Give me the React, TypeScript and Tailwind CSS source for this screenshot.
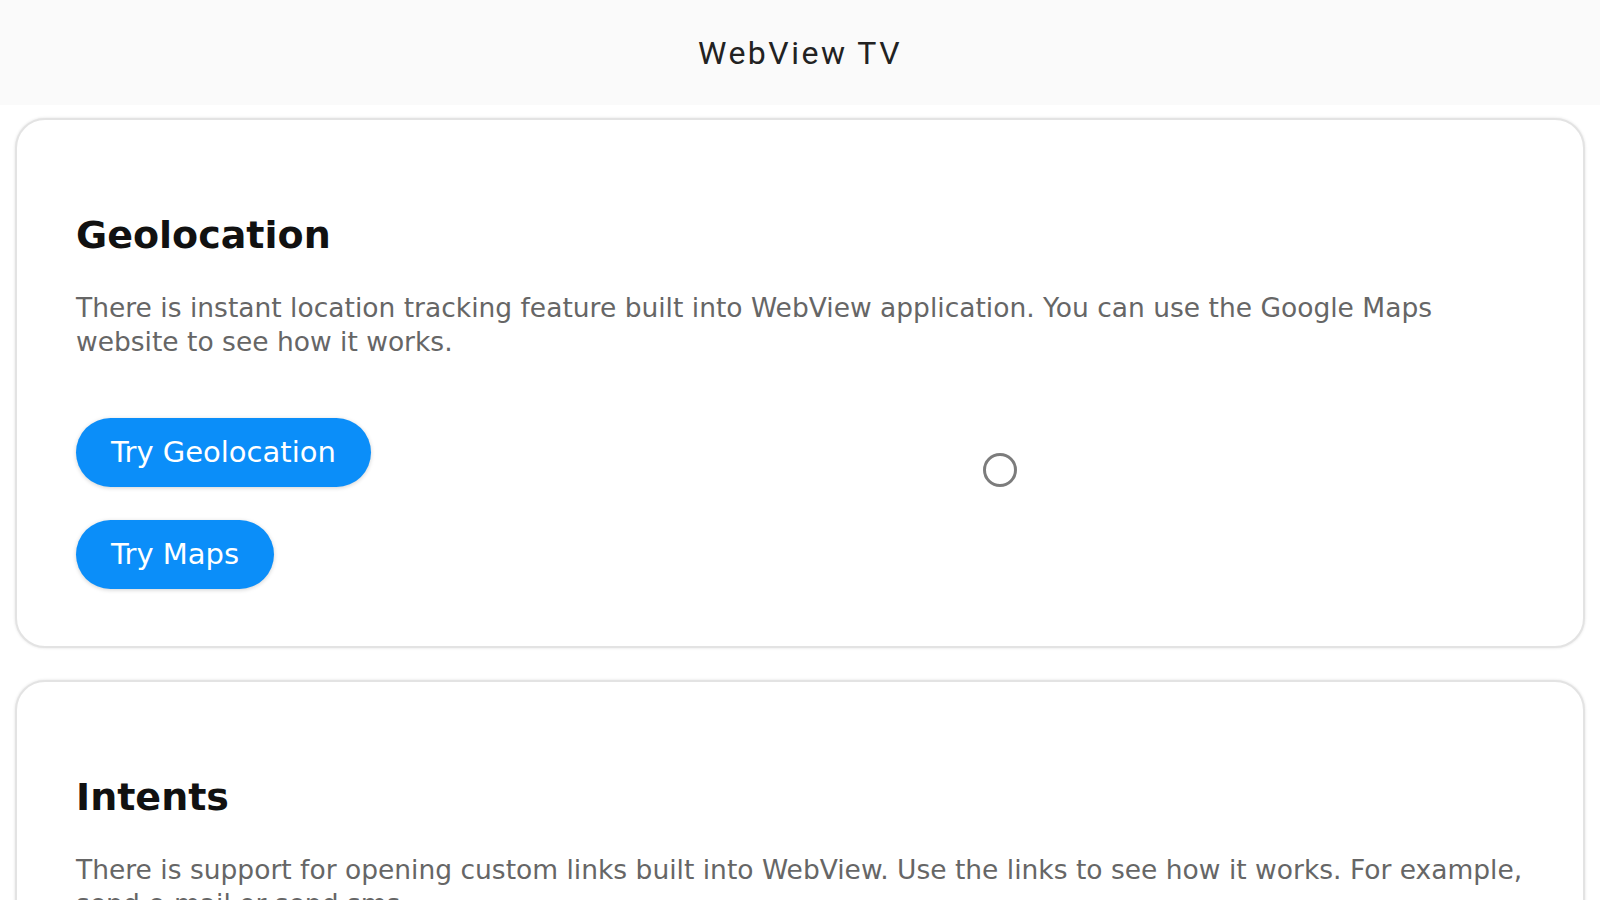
import { ReactNode } from "react";

function Section({
  title,
  text,
  children,
}: {
  title: string;
  text: string;
  children?: ReactNode;
}) {
  return (
    <div className="mx-[15px] rounded-[30px] border-2 border-[#e3e3e3] bg-white pb-[57px] pl-[59px] pr-[58px] pt-[96px] shadow-[0_0_3px_rgba(0,0,0,0.12)]">
      <h2 className="text-[38px] font-bold leading-[38px] text-[#111]">{title}</h2>
      <p className="mt-[37px] text-[26.5px] leading-[34px] text-[#666]">{text}</p>
      {children}
    </div>
  );
}

function PillButton({ label }: { label: string }) {
  return (
    <button className="flex h-[69px] items-center rounded-full bg-[#0b8ef9] px-[35px] text-[29px] text-white shadow-[0_1px_4px_rgba(0,0,0,0.18)]">
      {label}
    </button>
  );
}

export default function App() {
  return (
    <div
      className="relative h-[900px] overflow-hidden bg-white"
      style={{ fontFamily: '"DejaVu Sans", sans-serif' }}
    >
      {/* header */}
      <div className="flex h-[105px] items-center justify-center bg-[#fafafa]">
        <h1
          className="text-[32px] tracking-[2.5px] text-[#222]"
          style={{ fontFamily: "Roboto, sans-serif" }}
        >
          WebView TV
        </h1>
      </div>

      <div className="mt-[13px] flex flex-col gap-[32px]">
        <Section
          title="Geolocation"
          text="There is instant location tracking feature built into WebView application. You can use the Google Maps website to see how it works."
        >
          <div className="mt-[59px] flex flex-col items-start gap-[33px]">
            <PillButton label="Try Geolocation" />
            <PillButton label="Try Maps" />
          </div>
        </Section>

        <Section
          title="Intents"
          text="There is support for opening custom links built into WebView. Use the links to see how it works. For example, send e-mail or send sms."
        >
          <div className="mt-[59px] flex flex-col items-start gap-[33px]">
            <PillButton label="Send E-mail" />
            <PillButton label="Send SMS" />
          </div>
        </Section>
      </div>

      {/* tv pointer */}
      <div className="absolute left-[983px] top-[453px] h-[34px] w-[34px] rounded-full border-[3px] border-[#5c5c5c] opacity-80 blur-[0.5px]" />
    </div>
  );
}
